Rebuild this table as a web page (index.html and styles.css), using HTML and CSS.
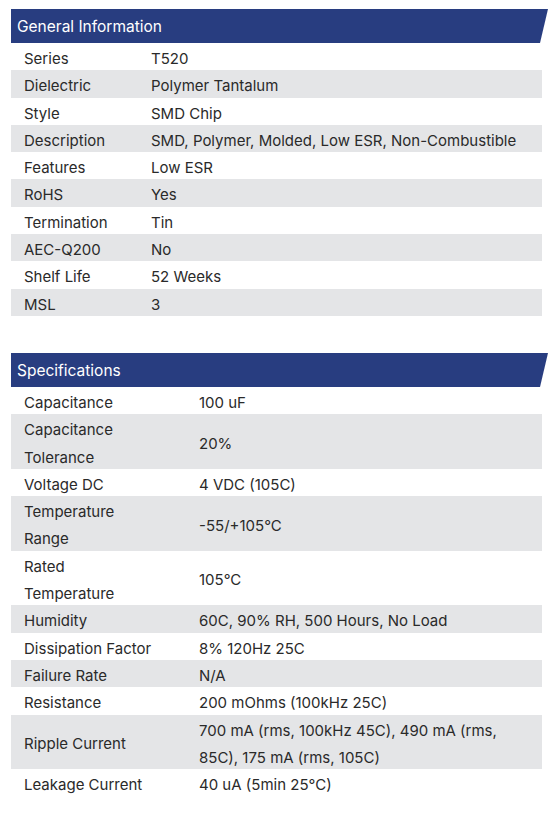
FILE: index.html
```html
<!DOCTYPE html>
<html>
<head>
<meta charset="utf-8">
<link rel="stylesheet" href="styles.css">
</head>
<body>
<div class="page">
  <section class="block">
    <div class="head"><span>General Information</span></div>
    <table class="tbl gen">
      <tr><td class="k"><span>Series</span></td><td><span>T520</span></td></tr>
      <tr><td class="k"><span>Dielectric</span></td><td><span>Polymer Tantalum</span></td></tr>
      <tr><td class="k"><span>Style</span></td><td><span>SMD Chip</span></td></tr>
      <tr><td class="k"><span>Description</span></td><td><span>SMD, Polymer, Molded, Low ESR, Non-Combustible</span></td></tr>
      <tr><td class="k"><span>Features</span></td><td><span>Low ESR</span></td></tr>
      <tr><td class="k"><span>RoHS</span></td><td><span>Yes</span></td></tr>
      <tr><td class="k"><span>Termination</span></td><td><span>Tin</span></td></tr>
      <tr><td class="k"><span>AEC-Q200</span></td><td><span>No</span></td></tr>
      <tr><td class="k"><span>Shelf Life</span></td><td><span>52 Weeks</span></td></tr>
      <tr><td class="k"><span>MSL</span></td><td><span>3</span></td></tr>
    </table>
  </section>
  <section class="block">
    <div class="head"><span>Specifications</span></div>
    <table class="tbl spec">
      <tr><td class="k"><span>Capacitance</span></td><td><span>100 uF</span></td></tr>
      <tr><td class="k"><span>Capacitance</span><br><span>Tolerance</span></td><td><span>20%</span></td></tr>
      <tr><td class="k"><span>Voltage DC</span></td><td><span>4 VDC (105C)</span></td></tr>
      <tr><td class="k"><span>Temperature</span><br><span>Range</span></td><td><span>-55/+105°C</span></td></tr>
      <tr><td class="k"><span>Rated</span><br><span>Temperature</span></td><td><span>105°C</span></td></tr>
      <tr><td class="k"><span>Humidity</span></td><td><span>60C, 90% RH, 500 Hours, No Load</span></td></tr>
      <tr><td class="k"><span>Dissipation Factor</span></td><td><span>8% 120Hz 25C</span></td></tr>
      <tr><td class="k"><span>Failure Rate</span></td><td><span>N/A</span></td></tr>
      <tr><td class="k"><span>Resistance</span></td><td><span>200 mOhms (100kHz 25C)</span></td></tr>
      <tr><td class="k"><span>Ripple Current</span></td><td><span>700 mA (rms, 100kHz 45C), 490 mA (rms,</span><br><span>85C), 175 mA (rms, 105C)</span></td></tr>
      <tr><td class="k"><span>Leakage Current</span></td><td><span>40 uA (5min 25°C)</span></td></tr>
    </table>
  </section>
</div>
</body>
</html>
```
FILE: styles.css
```css
html, body {
  margin: 0;
  padding: 0;
  background: #ffffff;
}
.page {
  padding: 9px 0 0 11px;
  width: 537px;
  font-family: "Inter", "Liberation Sans", sans-serif;
  color: #2a2a2a;
}
.block {
  margin-bottom: 37px;
}
.head {
  height: 34px;
  width: 537px;
  background: #283d80;
  clip-path: polygon(0 0, 100% 0, 529px 100%, 0 100%);
  display: flex;
  align-items: center;
  padding-left: 6px;
  padding-top: 1px;
  box-sizing: border-box;
}
.head span {
  color: #ffffff;
  font-size: 15.5px;
}
.tbl {
  width: 531px;
  border-collapse: collapse;
  font-size: 15px;
  line-height: 27.3px;
}
.tbl td {
  padding: 0;
  vertical-align: middle;
}
.tbl td span {
  line-height: 15px;
  vertical-align: -2px;
}
.tbl td.k {
  padding-left: 13px;
}
.tbl tr:nth-child(even) {
  background: #e4e5e7;
}
.gen td.k { width: 127px; }
.spec td.k { width: 175px; }
```
